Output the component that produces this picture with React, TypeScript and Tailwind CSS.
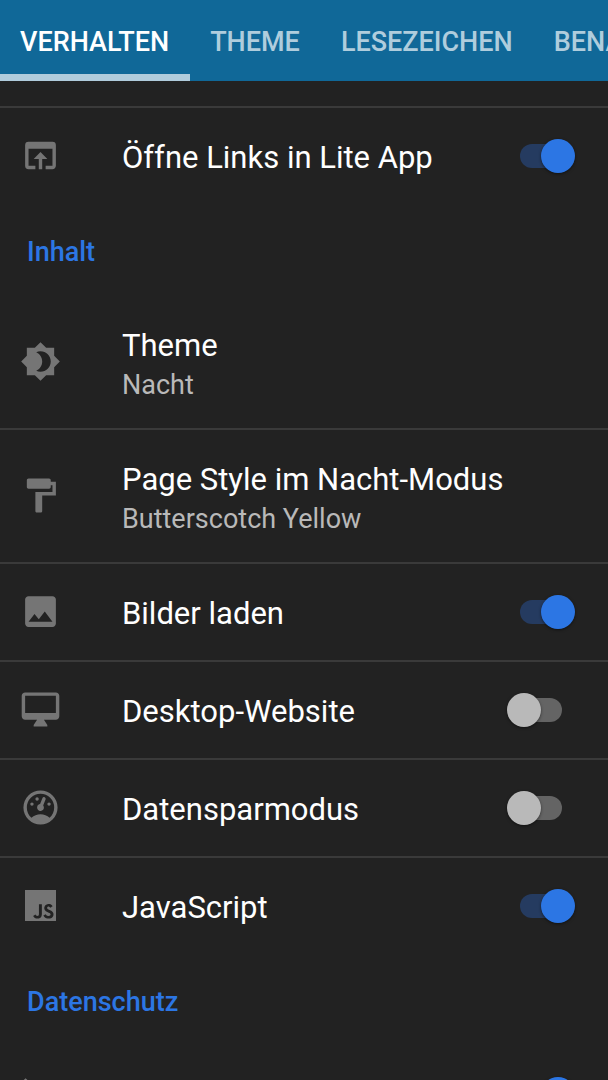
import { useState, type ReactNode } from "react";
import { MdBrightness4, MdFormatPaint, MdImage, MdOpenInBrowser, MdVisibilityOff } from "react-icons/md";
import { SiJavascript } from "react-icons/si";

const tabs = ["VERHALTEN", "THEME", "LESEZEICHEN", "BENACHRICHTIGUNGEN"];

function DesktopIcon() {
  return (
    <svg viewBox="0 0 24 24" fill="currentColor" className="size-full">
      <path d="M21 2H3c-1.1 0-2 .9-2 2v12c0 1.1.9 2 2 2h7l-2 3v1h8v-1l-2-3h7c1.1 0 2-.9 2-2V4c0-1.1-.9-2-2-2zm0 12H3V4h18v10z" />
    </svg>
  );
}

function GaugeIcon() {
  return (
    <svg viewBox="0 0 24 24" fill="currentColor" className="size-full">
      <path d="M12,2A10,10 0 0,0 2,12A10,10 0 0,0 12,22A10,10 0 0,0 22,12A10,10 0 0,0 12,2M12,4A8,8 0 0,1 20,12C20,14.4 19,16.5 17.3,18C15.9,16.7 14,16 12,16C10,16 8.2,16.7 6.7,18C5,16.5 4,14.4 4,12A8,8 0 0,1 12,4M14,5.89C13.62,5.9 13.26,6.15 13.1,6.54L11.81,9.77L11.71,10C11,10.13 10.41,10.6 10.14,11.26C9.73,12.29 10.23,13.45 11.26,13.86C12.29,14.27 13.45,13.77 13.86,12.74C14.12,12.08 14,11.32 13.57,10.76L13.67,10.5L14.96,7.29L14.97,7.26C15.17,6.75 14.92,6.17 14.41,5.96C14.28,5.91 14.15,5.89 14,5.89M10,6A1,1 0 0,0 9,7A1,1 0 0,0 10,8A1,1 0 0,0 11,7A1,1 0 0,0 10,6M7,9A1,1 0 0,0 6,10A1,1 0 0,0 7,11A1,1 0 0,0 8,10A1,1 0 0,0 7,9M17,9A1,1 0 0,0 16,10A1,1 0 0,0 17,11A1,1 0 0,0 18,10A1,1 0 0,0 17,9Z" />
    </svg>
  );
}

function RowIcon({ children }: { children: ReactNode }) {
  return (
    <span className="mb-px flex size-[41px] shrink-0 items-center justify-center text-[#757575]">
      {children}
    </span>
  );
}

function Switch({ id, on, label }: { id: string; on?: boolean; label?: string }) {
  return (
    <input
      id={id}
      type="checkbox"
      role="switch"
      aria-label={label}
      defaultChecked={on}
      className="relative h-[34px] w-[68px] shrink-0 cursor-pointer appearance-none before:absolute before:inset-x-[13px] before:inset-y-[5px] before:rounded-full before:bg-[#646464] after:absolute after:left-0 after:top-0 after:size-[34px] after:rounded-full after:bg-[#b9b9b9] after:shadow-[0_1px_3px_rgba(0,0,0,0.5)] checked:before:bg-[#253b60] checked:after:left-[34px] checked:after:bg-[#2c76e4]"
    />
  );
}

type SwitchRowProps = {
  id: string;
  icon: ReactNode;
  title: string;
  on?: boolean;
  divider?: boolean;
};

function SwitchRow({ id, icon, title, on, divider }: SwitchRowProps) {
  return (
    <li className={divider ? "border-b-2 border-[#3a3a3a]" : ""}>
      <div className="flex h-24 items-center pl-5 pr-[33px]">
        <RowIcon>{icon}</RowIcon>
        <label htmlFor={id} className="ml-[61px] flex-1 pt-1 text-[31px] leading-10 text-white">
          {title}
        </label>
        <Switch id={id} on={on} />
      </div>
    </li>
  );
}

function ChoiceRow({ icon, title, value }: { icon: ReactNode; title: string; value: string }) {
  return (
    <li className="border-b-2 border-[#3a3a3a]">
      <button type="button" className="flex h-[132px] w-full items-center pl-5 pr-[33px] text-left">
        <RowIcon>{icon}</RowIcon>
        <span className="ml-[61px] flex flex-1 flex-col gap-px pt-[5px]">
          <span className="text-[31px] leading-10 text-white">{title}</span>
          <span className="text-[27px] leading-9 text-[#b9b9b9]">{value}</span>
        </span>
      </button>
    </li>
  );
}

function SectionTitle({ children }: { children: ReactNode }) {
  return (
    <h2 className="flex h-[92px] items-center px-[27px] pt-1 text-[27px] font-medium leading-9 text-[#2c76e4]">
      {children}
    </h2>
  );
}

export default function App() {
  const [active, setActive] = useState("VERHALTEN");

  return (
    <div className="flex h-screen flex-col overflow-hidden bg-[#222222] font-['Roboto',sans-serif]">
      <header className="shrink-0 overflow-hidden bg-[#106898]">
        <nav role="tablist" className="flex">
          {tabs.map((tab) => (
            <button
              key={tab}
              type="button"
              role="tab"
              aria-selected={active === tab}
              onClick={() => setActive(tab)}
              className={`h-[81px] shrink-0 border-b-[7px] pl-5 pr-[21px] pt-[10px] text-[27px] font-medium leading-9 ${
                active === tab ? "border-[#b0ccdc] text-white" : "border-transparent text-[#afcddd]"
              }`}
            >
              {tab}
            </button>
          ))}
        </nav>
      </header>

      <main className="min-h-0 flex-1 overflow-hidden">
        <div className="h-[27px] border-b-2 border-[#3a3a3a]" />
        <ul>
          <SwitchRow id="lite-app" icon={<MdOpenInBrowser className="size-full" />} title="Öffne Links in Lite App" on />
        </ul>

        <SectionTitle>Inhalt</SectionTitle>
        <ul>
          <ChoiceRow icon={<MdBrightness4 className="size-full" />} title="Theme" value="Nacht" />
          <ChoiceRow
            icon={<MdFormatPaint className="size-full" />}
            title="Page Style im Nacht-Modus"
            value="Butterscotch Yellow"
          />
          <SwitchRow id="images" icon={<MdImage className="size-full" />} title="Bilder laden" on divider />
          <SwitchRow id="desktop" icon={<DesktopIcon />} title="Desktop-Website" divider />
          <SwitchRow id="data-saver" icon={<GaugeIcon />} title="Datensparmodus" divider />
          <SwitchRow id="javascript" icon={<SiJavascript className="size-[31px]" />} title="JavaScript" on />
        </ul>

        <SectionTitle>Datenschutz</SectionTitle>
        <div className="flex h-24 items-center justify-between pl-5 pr-[33px]">
          <RowIcon>
            <MdVisibilityOff className="size-full" />
          </RowIcon>
          <Switch id="privacy" label="Datenschutz" on />
        </div>
      </main>
    </div>
  );
}
